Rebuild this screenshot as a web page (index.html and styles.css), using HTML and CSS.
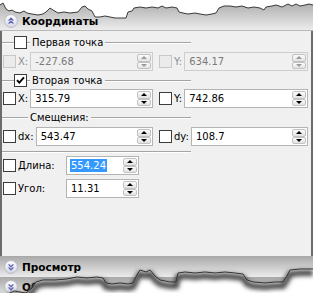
FILE: index.html
```html
<!DOCTYPE html>
<html>
<head>
<meta charset="utf-8">
<link rel="stylesheet" href="styles.css">
</head>
<body>
<div class="frame">
  <div class="hdr hdr-top">
    <svg class="ico" width="14" height="14" viewBox="0 0 14 14"><defs><linearGradient id="gi" x1="0" y1="0" x2="0" y2="1"><stop offset="0" stop-color="#ffffff"/><stop offset="1" stop-color="#d4d6e2"/></linearGradient></defs><circle cx="7" cy="7" r="6.4" fill="url(#gi)" stroke="#b4b6c6" stroke-width="0.9"/><path d="M4.6 6.6 L7 4.2 L9.4 6.6 M4.6 9.6 L7 7.2 L9.4 9.6" fill="none" stroke="#5a62b8" stroke-width="1.3"/></svg>
    <span class="ttl">Координаты</span>
  </div>
  <div class="body">
    <div class="legend">
      <span class="seg lead"></span>
      <span class="cb"></span>
      <span class="seg gap"></span>
      <span class="ltxt">Первая точка</span>
      <span class="seg fill"></span>
    </div>
    <div class="row">
      <div class="half">
        <span class="cb dis"></span><span class="lbl dis">X:</span>
        <div class="spin dis"><span class="val">-227.68</span><span class="btns"><span class="up"></span><span class="dn"></span></span></div>
      </div>
      <div class="half">
        <span class="cb dis"></span><span class="lbl dis">Y:</span>
        <div class="spin dis"><span class="val">634.17</span><span class="btns"><span class="up"></span><span class="dn"></span></span></div>
      </div>
    </div>
    <div class="legend">
      <span class="seg lead"></span>
      <span class="cb on"><svg width="11" height="11" viewBox="0 0 11 11"><path d="M2 5.2 L4.3 7.6 L9 2.4" fill="none" stroke="#000" stroke-width="1.9"/></svg></span>
      <span class="seg gap"></span>
      <span class="ltxt">Вторая точка</span>
      <span class="seg fill"></span>
    </div>
    <div class="row r2">
      <div class="half">
        <span class="cb"></span><span class="lbl">X:</span>
        <div class="spin"><span class="val">315.79</span><span class="btns"><span class="up"></span><span class="dn"></span></span></div>
      </div>
      <div class="half">
        <span class="cb"></span><span class="lbl">Y:</span>
        <div class="spin"><span class="val">742.86</span><span class="btns"><span class="up"></span><span class="dn"></span></span></div>
      </div>
    </div>
    <div class="legend">
      <span class="seg lead-long"></span>
      <span class="ltxt">Смещения:</span>
      <span class="seg fill"></span>
    </div>
    <div class="row">
      <div class="half">
        <span class="cb"></span><span class="lbl">dx:</span>
        <div class="spin"><span class="val">543.47</span><span class="btns"><span class="up"></span><span class="dn"></span></span></div>
      </div>
      <div class="half">
        <span class="cb"></span><span class="lbl">dy:</span>
        <div class="spin"><span class="val">108.7</span><span class="btns"><span class="up"></span><span class="dn"></span></span></div>
      </div>
    </div>
    <div class="seg endline"></div>
    <div class="single">
      <span class="cb"></span><span class="lbl wide">Длина:</span>
      <div class="spin short"><span class="val"><span class="sel">554.24</span></span><span class="btns"><span class="up"></span><span class="dn"></span></span></div>
    </div>
    <div class="single s2">
      <span class="cb"></span><span class="lbl wide">Угол:</span>
      <div class="spin short"><span class="val">11.31</span><span class="btns"><span class="up"></span><span class="dn"></span></span></div>
    </div>
  </div>
  <div class="hdr hdr-mid">
    <svg class="ico" width="14" height="14" viewBox="0 0 14 14"><defs><linearGradient id="gi2" x1="0" y1="0" x2="0" y2="1"><stop offset="0" stop-color="#ffffff"/><stop offset="1" stop-color="#d4d6e2"/></linearGradient></defs><circle cx="7" cy="7" r="6.4" fill="url(#gi2)" stroke="#b4b6c6" stroke-width="0.9"/><path d="M4.6 4.4 L7 6.8 L9.4 4.4 M4.6 7.4 L7 9.8 L9.4 7.4" fill="none" stroke="#5a62b8" stroke-width="1.3"/></svg>
    <span class="ttl">Просмотр</span>
  </div>
  <div class="hdr hdr-bot">
    <svg class="ico" width="14" height="14" viewBox="0 0 14 14"><circle cx="7" cy="7" r="6.4" fill="url(#gi2)" stroke="#b4b6c6" stroke-width="0.9"/><path d="M4.6 4.4 L7 6.8 L9.4 4.4 M4.6 7.4 L7 9.8 L9.4 7.4" fill="none" stroke="#5a62b8" stroke-width="1.3"/></svg>
    <span class="ttl">Объекты</span>
  </div>
  <svg class="torn" width="313" height="293" viewBox="0 0 313 293">
    <defs><filter id="blur" x="-10%" y="-50%" width="120%" height="200%"><feGaussianBlur stdDeviation="2"/></filter></defs>
    <polygon fill="#fff" points="0,0 0,5 3,3 6,9 9,11 12,10 15,12 20,13 24,11 27,13 32,14 38,15 43,14 46,12 50,8 53,10 58,13 64,12 70,13 78,12 82,7 85,6 88,9 92,11 95,17 100,17 105,16 110,17 115,18 120,18 126,18 128,12 132,11 134,8 140,7 146,8 152,7 158,8 162,6 166,8 172,7 177,8 179,12 183,13 188,14 195,13 200,14 206,15 212,14 216,13 219,8 224,6 230,6 236,7 242,6 248,8 254,7 260,8 264,10 266,7 272,6 276,5 282,7 288,4 292,6 296,4 300,6 305,5 309,4 313,5 313,0"/>
    <polyline fill="none" stroke="#3a3a3a" stroke-width="1" points="0,5 3,3 6,9 9,11 12,10 15,12 20,13 24,11 27,13 32,14 38,15 43,14 46,12 50,8 53,10 58,13 64,12 70,13 78,12 82,7 85,6 88,9 92,11 95,17 100,17 105,16 110,17 115,18 120,18 126,18 128,12 132,11 134,8 140,7 146,8 152,7 158,8 162,6 166,8 172,7 177,8 179,12 183,13 188,14 195,13 200,14 206,15 212,14 216,13 219,8 224,6 230,6 236,7 242,6 248,8 254,7 260,8 264,10 266,7 272,6 276,5 282,7 288,4 292,6 296,4 300,6 305,5 309,4 313,5"/>
    <polygon fill="#fff" points="0,296 8,294 14,291 20,292 26,293 32,288 36,282 43,280 55,280 67,279 77,277 87,278 97,277 103,278 106,283 112,284 120,283 128,284 133,283 137,275 140,270 146,272 150,270 155,276 160,280 170,282 176,282 178,273 185,272 195,273 205,272 215,273 225,272 235,273 243,274 247,280 253,282 265,283 275,282 283,282 287,276 290,270 300,269 313,269 313,300 0,300"/>
    <polyline fill="none" stroke="#4a4a4a" stroke-width="6" filter="url(#blur)" transform="translate(0,4)" points="0,296 8,294 14,291 20,292 26,293 32,288 36,282 43,280 55,280 67,279 77,277 87,278 97,277 103,278 106,283 112,284 120,283 128,284 133,283 137,275 140,270 146,272 150,270 155,276 160,280 170,282 176,282 178,273 185,272 195,273 205,272 215,273 225,272 235,273 243,274 247,280 253,282 265,283 275,282 283,282 287,276 290,270 300,269 313,269"/>
    <polyline fill="none" stroke="#333" stroke-width="1" points="0,296 8,294 14,291 20,292 26,293 32,288 36,282 43,280 55,280 67,279 77,277 87,278 97,277 103,278 106,283 112,284 120,283 128,284 133,283 137,275 140,270 146,272 150,270 155,276 160,280 170,282 176,282 178,273 185,272 195,273 205,272 215,273 225,272 235,273 243,274 247,280 253,282 265,283 275,282 283,282 287,276 290,270 300,269 313,269"/>
  </svg>
</div>
</body>
</html>
```
FILE: styles.css
```css
* { box-sizing: border-box; margin: 0; padding: 0; }
body { margin: 0; background: #fff; font-family: "DejaVu Sans", Verdana, sans-serif; font-size: 10px; color: #000; }
.frame { position: relative; width: 313px; height: 293px; overflow: hidden; background: #fff; }

.hdr { display: flex; align-items: center; gap: 4px; padding-left: 4px; background: linear-gradient(#a8a8a8, #ececec); }
.hdr-top { height: 31px; padding-top: 11px; border-bottom: 1px solid #b8b8b8; }
.hdr-mid { height: 21px; padding-top: 1px; }
.hdr-bot { height: 21px; padding-top: 3px; align-items: flex-start; }
.ico { display: block; flex: none; }
.ttl { font-weight: bold; font-size: 10.5px; line-height: 14px; }

.body { height: 225px; background: #f0f0f0; border-left: 2px solid #6c6c6c; border-right: 2px solid #6c6c6c; padding-top: 5px; }

.legend { display: flex; align-items: center; width: 189px; height: 13px; margin-top: 3px; }
.body > .legend:first-child { margin-top: 0; }
.seg { display: block; height: 2px; border-top: 1px solid #a4a4a4; border-bottom: 1px solid #ffffff; }
.lead { width: 12px; }
.lead-long { width: 26px; }
.gap { width: 3px; }
.fill { flex: 1; }
.ltxt { padding: 0 2px; line-height: 13px; }
.endline { width: 189px; margin-top: 5px; }

.cb { display: flex; align-items: center; justify-content: center; flex: none; width: 13px; height: 13px; border: 1px solid #3c3c3c; background: #fff; }
.cb.dis { border-color: #c8c8c8; background: #ebebeb; }

.row { display: grid; grid-template-columns: 150px 149px; column-gap: 6px; padding-left: 1px; margin-top: 3px; }
.row.r2 { margin-top: 2px; }
.half { display: flex; align-items: center; }
.lbl { margin-left: 2px; margin-right: 2px; line-height: 13px; }
.lbl.dis { color: #8c8c8c; }
.lbl.wide { width: 48px; margin-right: 0; }

.spin { flex: 1; display: flex; align-items: stretch; height: 19px; border: 1px solid #b4b4b4; background: #fff; }
.spin.dis { background: #f0f0f0; border-color: #cdcdcd; color: #7a7a7a; }
.spin.short { flex: none; width: 73px; }
.val { flex: 1; display: flex; align-items: center; padding-left: 4px; }
.sel { background: #3399ff; color: #fff; padding: 0 1px; margin-left: -1px; line-height: 13px; }

.btns { width: 15px; display: flex; flex-direction: column; padding: 1px 1px 1px 0; gap: 0; }
.up, .dn { flex: 1; display: flex; align-items: center; justify-content: center; border: 1px solid #c2c2c2; border-radius: 2px; background: linear-gradient(#fbfbfb, #e2e2e2); }
.up::after { content: ""; border-left: 3px solid transparent; border-right: 3px solid transparent; border-bottom: 3px solid #000; }
.dn::after { content: ""; border-left: 3px solid transparent; border-right: 3px solid transparent; border-top: 3px solid #000; }
.spin.dis .up::after { border-bottom-color: #9a9a9a; }
.spin.dis .dn::after { border-top-color: #9a9a9a; }

.single { display: flex; align-items: center; padding-left: 1px; margin-top: 3px; }
.single.s2 { margin-top: 4px; }

.torn { position: absolute; left: 0; top: 0; pointer-events: none; }
```
